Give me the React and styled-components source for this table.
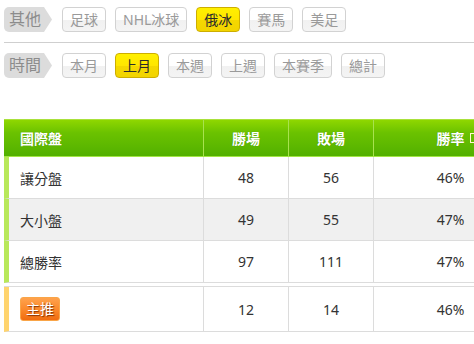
import React from 'react'
import styled, { createGlobalStyle, css } from 'styled-components'

const GlobalStyle = createGlobalStyle`
  html, body {
    margin: 0;
    background: #fff;
    overflow: hidden;
  }
  body {
    font-family: "Noto Sans", "Noto Sans CJK TC", sans-serif;
  }
`

const Page = styled.div`
  padding: 7px 0 0 4px;
  overflow: hidden;
`

const FilterRow = styled.div`
  display: flex;
  align-items: center;
  height: 25px;
`

const FilterLabel = styled.div`
  box-sizing: border-box;
  width: 48px;
  height: 25px;
  margin-right: 10px;
  padding-left: 5px;
  line-height: 25px;
  font-size: 16px;
  color: #8c8c8c;
  background: #dcdcdc;
  border-radius: 5px 0 0 5px;
  clip-path: polygon(0 0, 40px 0, 100% 50%, 40px 100%, 0 100%);
`

const FilterButton = styled.button`
  box-sizing: border-box;
  height: 25px;
  margin-right: 9px;
  padding: 0 7px;
  font-family: inherit;
  font-size: 14px;
  line-height: 23px;
  color: #9a9a9a;
  background: linear-gradient(#ffffff 0%, #ffffff 50%, #f1f1f1 52%, #f4f4f4 100%);
  border: 1px solid #d2d2d2;
  border-radius: 4px;
  cursor: pointer;

  ${(p) =>
    p.$active &&
    css`
      color: #2b2b2b;
      background: linear-gradient(#fff000 0%, #ffe600 50%, #f5d800 52%, #f2d400 100%);
      border-color: #cdae00;
    `}
`

const Divider = styled.hr`
  margin: 10px 0 10px;
  height: 1px;
  border: 0;
  background: #cfcfcf;
`

const TableWrap = styled.div`
  margin-top: 41px;
  width: 523px;
`

const cols = css`
  display: grid;
  grid-template-columns: 200px 85px 85px 153px;
`

const HeadRow = styled.div`
  ${cols}
  box-sizing: border-box;
  height: 38px;
  background: linear-gradient(#8fd700 0%, #6bc200 35%, #52b000 100%);
  border-top: 1px solid #a9e13c;
  border-bottom: 1px solid #a3e645;
`

const HeadCell = styled.div`
  position: relative;
  display: flex;
  align-items: center;
  justify-content: ${(p) => (p.$left ? 'flex-start' : 'center')};
  padding-left: ${(p) => (p.$left ? '16px' : '0')};
  font-size: 14px;
  font-weight: 700;
  color: #fff;
  text-shadow: 0 0 1px rgba(40, 90, 0, 0.4);
  border-right: 1px solid #a8e24e;

  &:last-child {
    border-right: 0;
  }
`

const HelpMark = styled.span`
  position: absolute;
  top: 13px;
  left: 96px;
  width: 8px;
  height: 8px;
  border: 1px solid #fff8d0;
`

const Block = styled.div`
  border-top: ${(p) => (p.$gap ? '1px solid #dcdcdc' : '0')};
  margin-top: ${(p) => (p.$gap ? '3px' : '0')};
`

const BodyRow = styled.div`
  ${cols}
  grid-template-columns: 195px 85px 85px 153px;
  height: ${(p) => (p.$tall ? '45px' : '42px')};
  box-sizing: border-box;
  background: ${(p) => (p.$shade ? '#f0f0f0' : '#fff')};
  border-left: 5px solid ${(p) => p.$accent};
  border-bottom: 1px solid #dcdcdc;
`

const Cell = styled.div`
  display: flex;
  align-items: center;
  justify-content: ${(p) => (p.$left ? 'flex-start' : 'center')};
  padding-left: ${(p) => (p.$left ? '11px' : '0')};
  font-size: 14px;
  color: #333;
  border-right: 1px solid #dcdcdc;

  &:last-child {
    border-right: 0;
  }
`

const Badge = styled.span`
  box-sizing: border-box;
  display: inline-block;
  height: 24px;
  padding: 0 5px;
  line-height: 22px;
  font-size: 14px;
  color: #fff;
  text-shadow: 1px 1px 1px rgba(120, 40, 0, 0.9);
  background: linear-gradient(#ffa24d 0%, #fb8a2c 50%, #f06c10 100%);
  border: 1px solid #f9a548;
  border-radius: 3px;
`

const sports = ['足球', 'NHL冰球', '俄冰', '賽馬', '美足']
const periods = ['本月', '上月', '本週', '上週', '本賽季', '總計']

const rows = [
  { name: '讓分盤', win: 48, lose: 56, rate: '46%' },
  { name: '大小盤', win: 49, lose: 55, rate: '47%' },
  { name: '總勝率', win: 97, lose: 111, rate: '47%' },
]

export default function App() {
  return (
    <>
      <GlobalStyle />
      <Page>
        <FilterRow>
          <FilterLabel>其他</FilterLabel>
          {sports.map((s) => (
            <FilterButton key={s} $active={s === '俄冰'}>
              {s}
            </FilterButton>
          ))}
        </FilterRow>
        <Divider />
        <FilterRow>
          <FilterLabel>時間</FilterLabel>
          {periods.map((p) => (
            <FilterButton key={p} $active={p === '上月'}>
              {p}
            </FilterButton>
          ))}
        </FilterRow>

        <TableWrap>
          <HeadRow>
            <HeadCell $left>國際盤</HeadCell>
            <HeadCell>勝場</HeadCell>
            <HeadCell>敗場</HeadCell>
            <HeadCell>
              勝率
              <HelpMark />
            </HeadCell>
          </HeadRow>
          <Block>
            {rows.map((r, i) => (
              <BodyRow key={r.name} $accent="#b8e85a" $shade={i === 1}>
                <Cell $left>{r.name}</Cell>
                <Cell>{r.win}</Cell>
                <Cell>{r.lose}</Cell>
                <Cell>{r.rate}</Cell>
              </BodyRow>
            ))}
          </Block>
          <Block $gap>
            <BodyRow $accent="#ffd46e" $tall>
              <Cell $left>
                <Badge>主推</Badge>
              </Cell>
              <Cell>12</Cell>
              <Cell>14</Cell>
              <Cell>46%</Cell>
            </BodyRow>
          </Block>
        </TableWrap>
      </Page>
    </>
  )
}
